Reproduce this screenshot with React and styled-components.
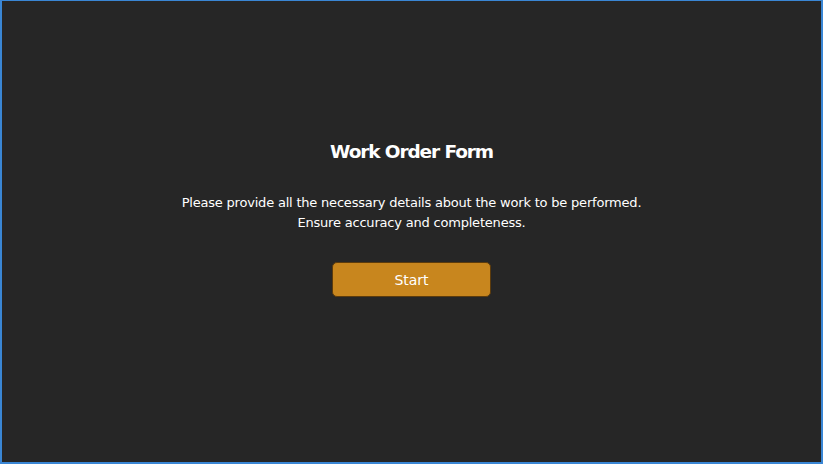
import React from 'react';
import styled, { createGlobalStyle } from 'styled-components';

const GlobalStyle = createGlobalStyle`
  html, body {
    margin: 0;
    padding: 0;
    background: #262626;
  }
  * {
    box-sizing: border-box;
  }
`;

const Frame = styled.div`
  width: 823px;
  height: 464px;
  border: 2px solid #3a86d4;
  border-top-width: 1px;
  background: #262626;
  display: flex;
  flex-direction: column;
  align-items: center;
  padding-top: 137px;
  font-family: 'DejaVu Sans', 'Open Sans', Arial, sans-serif;
  color: #ffffff;
`;

const Title = styled.h1`
  margin: 0;
  font-size: 18.5px;
  line-height: 28px;
  font-weight: 700;
  letter-spacing: -1.1px;
`;

const Lead = styled.p`
  margin: 27px 0 0;
  font-size: 13px;
  line-height: 20px;
  text-align: center;
  letter-spacing: -0.2px;
`;

const StartButton = styled.button`
  margin-top: 29px;
  width: 159px;
  height: 35px;
  border: 1px solid #5c3b0c;
  border-radius: 5px;
  background: #c8861e;
  color: #ffffff;
  font-family: inherit;
  font-size: 14px;
  font-weight: 500;
  cursor: pointer;
`;

export default function App() {
  return (
    <>
      <GlobalStyle />
      <Frame>
        <Title>Work Order Form</Title>
        <Lead>
          Please provide all the necessary details about the work to be performed.
          <br />
          Ensure accuracy and completeness.
        </Lead>
        <StartButton>Start</StartButton>
      </Frame>
    </>
  );
}
